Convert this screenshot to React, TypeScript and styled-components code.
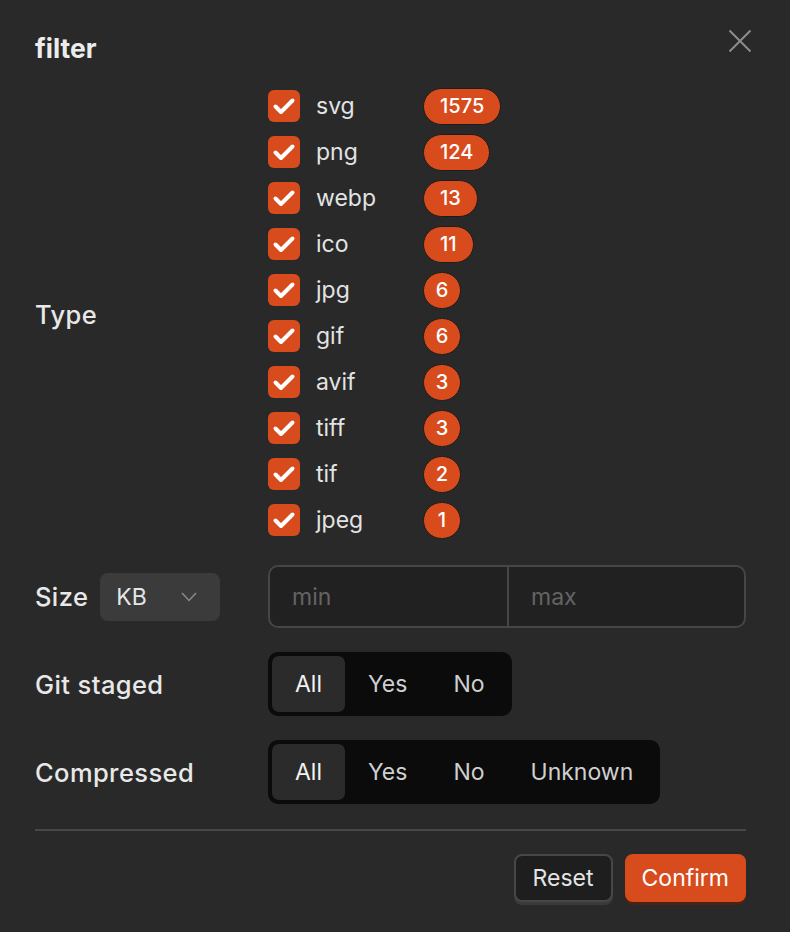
import React, { useState } from 'react';
import styled, { createGlobalStyle } from 'styled-components';

const GlobalStyle = createGlobalStyle`
  html, body {
    margin: 0;
    padding: 0;
    background: #292929;
  }
  body {
    font-family: Inter, "Noto Sans", "Liberation Sans", sans-serif;
    color: #e6e6e6;
    -webkit-font-smoothing: antialiased;
  }
  * {
    box-sizing: border-box;
  }
`;

const ORANGE = '#d84b1d';

const Panel = styled.div`
  width: 790px;
  height: 932px;
  background: #292929;
  padding: 24px 44px 0 35px;
  display: flex;
  flex-direction: column;
`;

const Header = styled.div`
  display: flex;
  align-items: center;
  justify-content: space-between;
  height: 48px;
  margin-bottom: 11px;
`;

const Title = styled.h2`
  margin: 0;
  font-size: 26.5px;
  font-weight: 700;
  color: #ececec;
`;

const CloseButton = styled.button`
  background: none;
  border: none;
  padding: 0;
  margin-right: -6px;
  margin-top: -14px;
  width: 24px;
  height: 24px;
  cursor: pointer;
  display: flex;
  align-items: center;
  justify-content: center;
`;

const Form = styled.div`
  display: grid;
  grid-template-columns: 233px 1fr;
  row-gap: 24px;
  align-items: center;
`;

const Label = styled.div`
  font-size: 25.5px;
  font-weight: 500;
  letter-spacing: 0.4px;
  color: #e8e8e8;
`;

const TypeLabel = styled(Label)`
  padding-top: 4px;
`;

const SizeLabel = styled.div`
  display: flex;
  align-items: center;
  gap: 12px;
`;

const TypeList = styled.div`
  display: flex;
  flex-direction: column;
  margin-bottom: -2px;
`;

const TypeRow = styled.label`
  display: grid;
  grid-template-columns: 32px 91px auto;
  column-gap: 16px;
  align-items: center;
  height: 46px;
  cursor: pointer;
`;

const Check = styled.span<{ $on: boolean }>`
  width: 32px;
  height: 32px;
  border-radius: 6px;
  background: ${(p) => (p.$on ? ORANGE : 'transparent')};
  border: ${(p) => (p.$on ? 'none' : '2px solid #555')};
  display: flex;
  align-items: center;
  justify-content: center;
`;

const TypeName = styled.span`
  font-size: 23px;
  color: #e3e3e3;
`;

const Badge = styled.span`
  justify-self: start;
  height: 37px;
  min-width: 38px;
  padding: 0 16px;
  border-radius: 999px;
  border: 1.5px solid #1c1c1c;
  background: ${ORANGE};
  color: #fff;
  font-size: 20px;
  font-weight: 500;
  display: flex;
  align-items: center;
  justify-content: center;
`;

const SingleBadge = styled(Badge)`
  width: 38px;
  padding: 0;
`;

const Select = styled.div`
  width: 120px;
  height: 48px;
  border-radius: 8px;
  background: #3b3b3b;
  display: flex;
  align-items: center;
  justify-content: space-between;
  padding: 0 23px 0 16px;
  font-size: 23px;
  color: #e6e6e6;
  cursor: pointer;
`;

const RangeGroup = styled.div`
  display: grid;
  grid-template-columns: 1fr 1fr;
  height: 63px;
  border: 2px solid #464646;
  border-radius: 10px;
  background: #212121;
  overflow: hidden;
`;

const RangeInput = styled.input`
  background: transparent;
  border: none;
  outline: none;
  padding: 0 22px;
  font-family: inherit;
  font-size: 23px;
  color: #e6e6e6;
  min-width: 0;

  & + & {
    border-left: 2px solid #464646;
  }

  &::placeholder {
    color: #646464;
  }
`;

const Segmented = styled.div`
  justify-self: start;
  display: flex;
  padding: 4px;
  background: #0b0b0b;
  border-radius: 10px;
`;

const Segment = styled.button<{ $active: boolean }>`
  height: 56px;
  padding: 0 23px;
  border: none;
  border-radius: 7px;
  background: ${(p) => (p.$active ? '#2b2b2b' : 'transparent')};
  color: ${(p) => (p.$active ? '#f2f2f2' : '#cfcfcf')};
  font-family: inherit;
  font-size: 23px;
  cursor: pointer;
`;

const Divider = styled.hr`
  margin: 25px 0 0;
  border: none;
  height: 2px;
  background: #474747;
`;

const Footer = styled.div`
  display: flex;
  justify-content: flex-end;
  gap: 12px;
  margin-top: 23px;
`;

const Button = styled.button<{ $primary?: boolean }>`
  height: 48px;
  padding: 0 17px;
  border-radius: 8px;
  font-family: inherit;
  font-size: 23px;
  cursor: pointer;
  color: ${(p) => (p.$primary ? '#ffffff' : '#e4e4e4')};
  background: ${(p) => (p.$primary ? ORANGE : '#1e1e1e')};
  border: ${(p) => (p.$primary ? 'none' : '2px solid #474747')};
  box-shadow: ${(p) => (p.$primary ? '0 3px 0 #4a2313' : '0 3px 0 #3a3a3a')};
`;

const types = [
  { name: 'svg', count: 1575 },
  { name: 'png', count: 124 },
  { name: 'webp', count: 13 },
  { name: 'ico', count: 11 },
  { name: 'jpg', count: 6 },
  { name: 'gif', count: 6 },
  { name: 'avif', count: 3 },
  { name: 'tiff', count: 3 },
  { name: 'tif', count: 2 },
  { name: 'jpeg', count: 1 },
];

const CheckIcon = () => (
  <svg width="32" height="32" viewBox="0 0 32 32">
    <path
      d="M7.5 16.5 L13 22 L24.5 10.5"
      fill="none"
      stroke="#fff"
      strokeWidth="4"
      strokeLinecap="round"
      strokeLinejoin="round"
    />
  </svg>
);

const SegmentGroup = ({ options }: { options: string[] }) => {
  const [value, setValue] = useState(options[0]);
  return (
    <Segmented>
      {options.map((o) => (
        <Segment key={o} $active={o === value} onClick={() => setValue(o)}>
          {o}
        </Segment>
      ))}
    </Segmented>
  );
};

const App = () => {
  const [checked, setChecked] = useState<string[]>(types.map((t) => t.name));

  const toggle = (name: string) =>
    setChecked((c) => (c.includes(name) ? c.filter((n) => n !== name) : [...c, name]));

  return (
    <>
      <GlobalStyle />
      <Panel>
        <Header>
          <Title>filter</Title>
          <CloseButton aria-label="close">
            <svg width="24" height="24" viewBox="0 0 24 24">
              <path d="M1.5 1.5 L22.5 22.5 M22.5 1.5 L1.5 22.5" stroke="#8c8c8c" strokeWidth="2" />
            </svg>
          </CloseButton>
        </Header>

        <Form>
          <TypeLabel>Type</TypeLabel>
          <TypeList>
            {types.map((t) => {
              const on = checked.includes(t.name);
              const BadgeEl = t.count < 10 ? SingleBadge : Badge;
              return (
                <TypeRow key={t.name} onClick={() => toggle(t.name)}>
                  <Check $on={on}>{on && <CheckIcon />}</Check>
                  <TypeName>{t.name}</TypeName>
                  <BadgeEl>{t.count}</BadgeEl>
                </TypeRow>
              );
            })}
          </TypeList>

          <SizeLabel>
            <Label>Size</Label>
            <Select>
              KB
              <svg width="16" height="10" viewBox="0 0 16 10">
                <path d="M1 1 L8 8.5 L15 1" fill="none" stroke="#8a8a8a" strokeWidth="1.5" />
              </svg>
            </Select>
          </SizeLabel>
          <RangeGroup>
            <RangeInput placeholder="min" />
            <RangeInput placeholder="max" />
          </RangeGroup>

          <Label>Git staged</Label>
          <SegmentGroup options={['All', 'Yes', 'No']} />

          <Label>Compressed</Label>
          <SegmentGroup options={['All', 'Yes', 'No', 'Unknown']} />
        </Form>

        <Divider />
        <Footer>
          <Button>Reset</Button>
          <Button $primary>Confirm</Button>
        </Footer>
      </Panel>
    </>
  );
};

export default App;
